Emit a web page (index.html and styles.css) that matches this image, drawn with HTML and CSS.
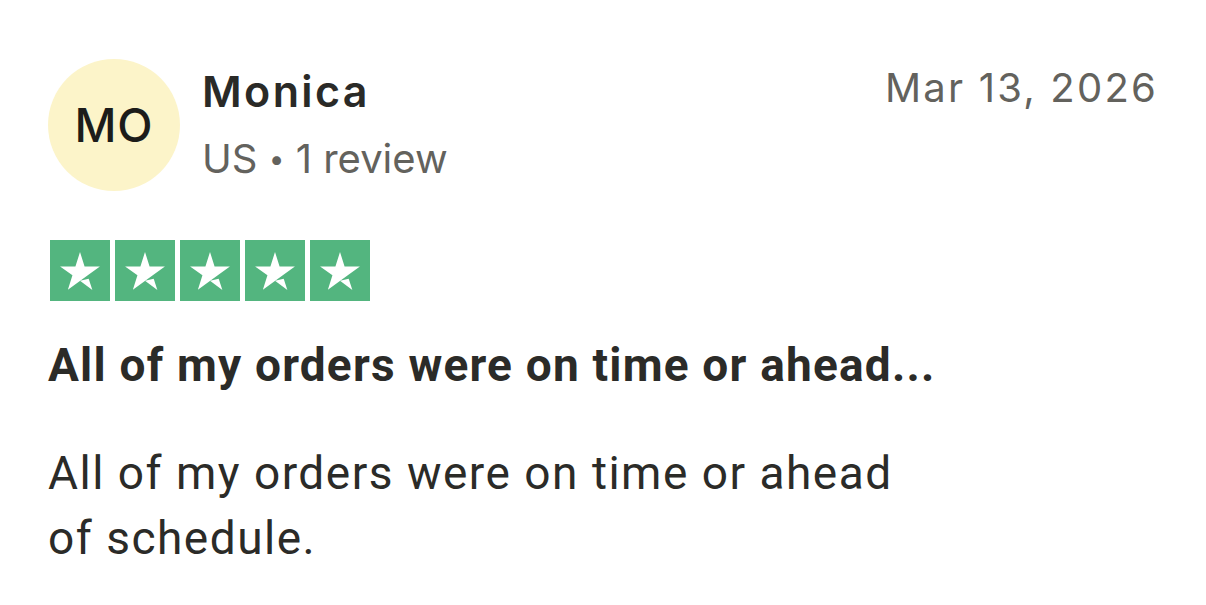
FILE: index.html
```html
<!DOCTYPE html>
<html lang="en">
<head>
  <meta charset="UTF-8">
  <meta name="viewport" content="width=device-width, initial-scale=1.0">
  <title>Review</title>
  <link rel="stylesheet" href="styles.css">
</head>
<body>
  <article class="review">
    <header class="review-head">
      <div class="avatar">MO</div>
      <div class="author">
        <p class="author-name">Monica</p>
        <p class="author-meta">US <span class="dot">•</span> 1 review</p>
      </div>
      <time class="review-date" datetime="2026-03-13">Mar 13, 2026</time>
    </header>

    <div class="stars" aria-label="Rated 5 out of 5">
      <span class="star"><svg viewBox="3.3 2.8 17.4 16.6"><path d="M20.7 9.1h-6.7l-2-6.3-2 6.3H3.3l5.4 3.9-2 6.3 5.4-3.9 3.3-2.4 5.3-3.9z"/><path d="M12 15.4l3.8-.9 1.6 4.9z"/></svg></span>
      <span class="star"><svg viewBox="3.3 2.8 17.4 16.6"><path d="M20.7 9.1h-6.7l-2-6.3-2 6.3H3.3l5.4 3.9-2 6.3 5.4-3.9 3.3-2.4 5.3-3.9z"/><path d="M12 15.4l3.8-.9 1.6 4.9z"/></svg></span>
      <span class="star"><svg viewBox="3.3 2.8 17.4 16.6"><path d="M20.7 9.1h-6.7l-2-6.3-2 6.3H3.3l5.4 3.9-2 6.3 5.4-3.9 3.3-2.4 5.3-3.9z"/><path d="M12 15.4l3.8-.9 1.6 4.9z"/></svg></span>
      <span class="star"><svg viewBox="3.3 2.8 17.4 16.6"><path d="M20.7 9.1h-6.7l-2-6.3-2 6.3H3.3l5.4 3.9-2 6.3 5.4-3.9 3.3-2.4 5.3-3.9z"/><path d="M12 15.4l3.8-.9 1.6 4.9z"/></svg></span>
      <span class="star"><svg viewBox="3.3 2.8 17.4 16.6"><path d="M20.7 9.1h-6.7l-2-6.3-2 6.3H3.3l5.4 3.9-2 6.3 5.4-3.9 3.3-2.4 5.3-3.9z"/><path d="M12 15.4l3.8-.9 1.6 4.9z"/></svg></span>
    </div>

    <h2 class="review-title">All of my orders were on time or ahead...</h2>
    <p class="review-text">All of my orders were on time or ahead of schedule.</p>
  </article>
</body>
</html>
```

FILE: styles.css
```css
* { margin: 0; padding: 0; box-sizing: border-box; }
body {
  background: #ffffff;
  color: #2b2b28;
  font-family: Roboto, "Liberation Sans", sans-serif;
}
.review {
  padding: 59px 48px 0 48px;
}

/* top row: avatar, name, date */
.review-head {
  display: flex;
  align-items: flex-start;
}
.avatar {
  width: 132px; height: 132px;
  border-radius: 50%;
  background-color: #fcf4c9;
  display: flex;
  justify-content: center;
  align-items: center;
  font-family: Inter, sans-serif;
  font-size: 46px; font-weight: 500;
  color: #1c1c1a;
  letter-spacing: 1px;
  flex-shrink: 0;
}
.author {
  margin-left: 22px;
  margin-top: 6px;
  flex: 1;
  font-family: Inter, sans-serif;
}
.author-name {
  font-size: 43px; font-weight: 600;
  line-height: 1.21;
  letter-spacing: 2.4px;
  color: #2a2a27;
}
.author-meta {
  margin-top: 18px;
  font-size: 40px;
  line-height: 1.21;
  color: #63625d;
}
.dot { font-size: 0.7em; vertical-align: 0.15em; }
.review-date {
  margin-top: 5px;
  font-family: Inter, sans-serif;
  font-size: 40px;
  line-height: 1.21;
  color: #63625d;
  letter-spacing: 2.2px;
}

/* rating */
.stars {
  display: flex;
  gap: 5px;
  margin: 49px 0 0 2px;
}
.star {
  width: 60px; height: 61px;
  background-color: #53b57f;
  display: flex;
  justify-content: center;
  padding-top: 12px;
}
.star svg { width: 40px; height: 38px; fill: #ffffff; }

/* title and body */
.review-title {
  margin-top: 36px;
  font-size: 46px; font-weight: 700;
  line-height: 56px;
  letter-spacing: 1.2px;
}
.review-text {
  margin-top: 48px;
  max-width: 900px;
  font-size: 46px;
  line-height: 65px;
  letter-spacing: 1.5px;
}
```
